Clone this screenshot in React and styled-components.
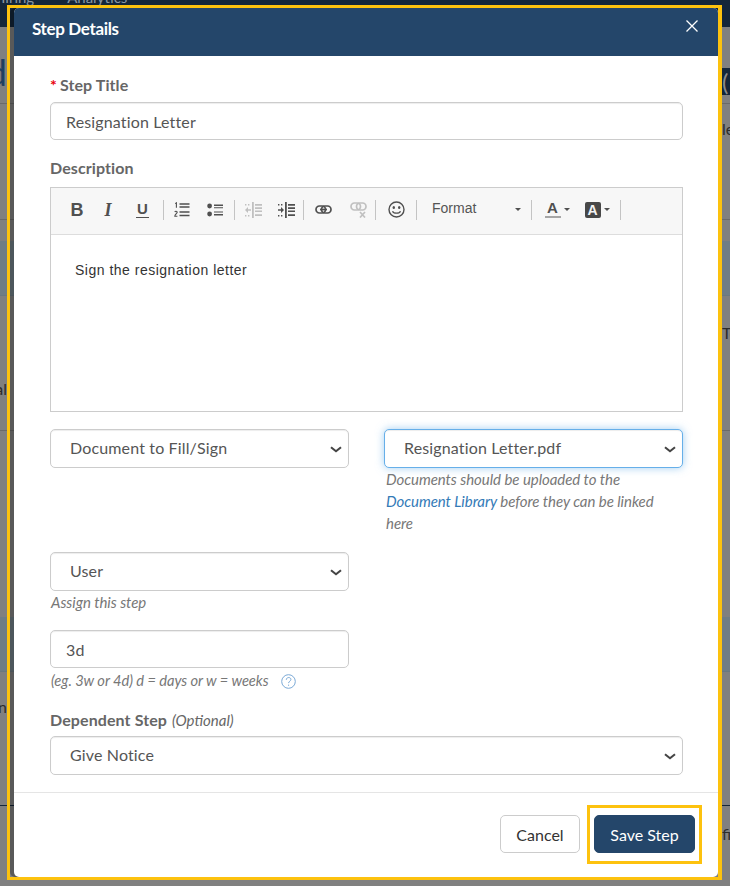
import React from "react";
import styled, { createGlobalStyle } from "styled-components";

const Global = createGlobalStyle`
  html, body { margin: 0; padding: 0; background: #808080; }
  * { box-sizing: border-box; }
`;

const Page = styled.div`
  position: relative;
  width: 730px;
  height: 886px;
  overflow: hidden;
  font-family: Lato, "Open Sans", sans-serif;
`;

/* dimmed application behind the dialog */
const Backdrop = styled.div`
  display: flex;
  flex-direction: column;
  height: 886px;
  background: #808080;
  color: #2c2c2c;
  font-size: 16px;
`;
const TopNav = styled.div`
  display: flex;
  gap: 33px;
  height: 27px;
  margin-left: -6px;
  background: #14263a;
  color: #8a96a3;
  font-size: 15px;
  line-height: 1;
  overflow: hidden;
  span { margin-top: -10px; }
`;
const BackRow = styled.div`
  display: flex;
  justify-content: space-between;
  align-items: flex-start;
  height: ${p => p.$h}px;
  background: ${p => p.$tint ? "#6f7d85" : "transparent"};
  border-bottom: ${p => p.$line ? `1px solid ${p.$line}` : "none"};
`;
const EdgeLeft = styled.span`
  width: 7px;
  display: flex;
  justify-content: flex-end;
  overflow: hidden;
  white-space: nowrap;
  margin-top: ${p => p.$t || 0}px;
  color: ${p => p.$c || "inherit"};
  font-size: ${p => p.$s || 16}px;
  line-height: 1.2;
`;
const EdgeRight = styled.span`
  width: 8px;
  overflow: hidden;
  white-space: nowrap;
  margin-top: ${p => p.$t || 0}px;
  font-size: ${p => p.$s || 16}px;
  line-height: 1.2;
  background: ${p => p.$bg || "transparent"};
  color: ${p => p.$c || "inherit"};
  height: ${p => p.$h ? p.$h + "px" : "auto"};
`;

const Modal = styled.div`
  position: absolute;
  left: 14px;
  top: 8px;
  width: 704px;
  height: 869px;
  display: flex;
  flex-direction: column;
  background: #fff;
  border-radius: 5px;
  box-shadow: -4px 0 0 rgba(0, 0, 0, 0.3);
`;
const Header = styled.header`
  flex: none;
  display: flex;
  justify-content: space-between;
  height: 48px;
  padding: 11px 19px 0 18px;
  background: #24466a;
  border-radius: 5px 5px 0 0;
  color: #fff;
`;
const Title = styled.h4`
  margin: 0;
  font-size: 17px;
  line-height: 20px;
  font-weight: 700;
  letter-spacing: -0.35px;
`;
const Close = styled.button`
  width: 14px;
  height: 14px;
  padding: 0;
  margin: 0;
  border: 0;
  background: none;
  color: #fff;
  display: flex;
`;
const Body = styled.div`
  flex: none;
  padding: 19px 35px 17px 36px;
  border-bottom: 1px solid #e5e5e5;
`;
const Label = styled.label`
  display: block;
  height: 20px;
  margin-bottom: ${p => p.$mb}px;
  color: #666;
  font-size: 16px;
  line-height: 20px;
  font-weight: 700;
  letter-spacing: 0.1px;
  em { font-weight: 400; font-size: 15px; letter-spacing: 0; margin-left: 1px; }
`;
const Req = styled.span`
  color: #e8000b;
  margin-right: 3px;
`;
const Input = styled.input`
  display: block;
  width: 100%;
  height: 38px;
  padding: 0 15px;
  margin-bottom: ${p => p.$mb || 0}px;
  border: 1px solid #ccc;
  border-radius: 5px;
  background: #fff;
  box-shadow: inset 0 1px 1px rgba(0, 0, 0, 0.075);
  color: #555;
  font: 400 16px Lato, sans-serif;
  letter-spacing: 0.15px;
  outline: none;
`;
const SelectBox = styled.div`
  position: relative;
  color: #444;
  svg { position: absolute; right: 7px; top: 17px; pointer-events: none; }
`;
const Select = styled.select`
  display: block;
  width: 100%;
  height: 39px;
  padding: 0 30px 2px 19px;
  appearance: none;
  border: 1px solid ${p => p.$focus ? "#66afe9" : "#ccc"};
  border-radius: 5px;
  background: #fff;
  box-shadow: ${p => p.$focus
    ? "inset 0 1px 1px rgba(0,0,0,.075), 0 0 8px rgba(102,175,233,.6)"
    : "inset 0 1px 1px rgba(0,0,0,.075)"};
  color: #555;
  font: 400 16px Lato, sans-serif;
  letter-spacing: 0.15px;
  outline: none;
`;
const Editor = styled.div`
  height: 225px;
  margin-bottom: 17px;
  border: 1px solid #ccc;
`;
const Toolbar = styled.div`
  display: flex;
  align-items: center;
  height: 47px;
  padding: 0 0 3px 9px;
  background: #f7f7f7;
  border-bottom: 1px solid #ddd;
  color: #505050;
`;
const Tool = styled.span`
  flex: none;
  display: flex;
  justify-content: center;
  align-items: center;
  width: ${p => p.$w}px;
  margin-right: ${p => p.$mr || 0}px;
  height: 22px;
  opacity: ${p => p.$off ? 0.32 : 1};
`;
const Sep = styled.span`
  flex: none;
  width: 1px;
  height: 20px;
  background: #c4c4c4;
`;
const BoldGlyph = styled.span`
  font: 700 18px/1 "Liberation Sans", sans-serif;
`;
const ItalicGlyph = styled.span`
  font: italic 700 18px/1 "Liberation Serif", serif;
`;
const UnderGlyph = styled.span`
  font: 700 15px/14px "Liberation Sans", sans-serif;
  border-bottom: 1px solid #505050;
  padding: 0 1px 1px;
`;
const FormatLabel = styled.span`
  flex: none;
  width: 114px;
  padding: 0 10px 0 15px;
  display: flex;
  justify-content: space-between;
  align-items: center;
  color: #555;
  font: 400 14px "Liberation Sans", sans-serif;
  span { margin-top: -3px; }
`;
const Caret = styled.i`
  display: inline-block;
  width: 0;
  height: 0;
  border-left: 3.5px solid transparent;
  border-right: 3.5px solid transparent;
  border-top: 3.5px solid #505050;
`;
const ColorGlyph = styled.span`
  width: 16px;
  height: 17px;
  text-align: center;
  font: 700 15px/14px "Liberation Sans", sans-serif;
  border-bottom: 2px solid #a6a6a6;
  margin-right: 3px;
`;
const BgGlyph = styled.span`
  width: 16px;
  height: 16px;
  border-radius: 2px;
  background: #484848;
  color: #f4f4f4;
  text-align: center;
  font: 700 14px/16px "Liberation Sans", sans-serif;
  margin-right: 3px;
`;
const EditArea = styled.div`
  padding: 27px 24px;
  color: #333;
  font: 400 14px/16px "Liberation Sans", sans-serif;
  letter-spacing: 0.5px;
`;
const Columns = styled.div`
  display: grid;
  grid-template-columns: 299px 299px;
  column-gap: 35px;
  height: 106px;
  margin-bottom: 17px;
`;
const HalfColumn = styled.div`
  width: 299px;
`;
const Help = styled.p`
  margin: ${p => p.$t || 0}px 0 ${p => p.$b || 0}px;
  padding-left: ${p => p.$pl || 0}px;
  color: #777;
  font-size: ${p => p.$s || 15}px;
  line-height: 22px;
  font-style: italic;
  letter-spacing: -0.05px;
  white-space: ${p => p.$nowrap ? "nowrap" : "normal"};
  a { color: #337ab7; text-decoration: none; }
`;
const HelpIcon = styled.span`
  display: inline-flex;
  vertical-align: -3px;
  margin-left: 12px;
  color: #7aa9d6;
`;
const Footer = styled.footer`
  flex: 1;
  display: flex;
  justify-content: flex-end;
  align-items: flex-start;
  gap: 14px;
  padding: 22px 23px 0 0;
`;
const Button = styled.button`
  position: relative;
  width: ${p => p.$w}px;
  height: 38px;
  padding: 0;
  border: 1px solid ${p => p.$primary ? "#24466a" : "#ccc"};
  border-radius: 5px;
  background: ${p => p.$primary ? "#24466a" : "#fff"};
  color: ${p => p.$primary ? "#fff" : "#333"};
  font: 400 16px Lato, sans-serif;
`;
const PageMark = styled.div`
  position: absolute;
  left: 7px;
  top: 5px;
  width: 715px;
  height: 875px;
  border: 3px solid #fdc20e;
  border-right-width: 4px;
  pointer-events: none;
`;
const ButtonMark = styled.span`
  position: absolute;
  left: -8px;
  right: -8px;
  top: -11px;
  bottom: -12px;
  border: 3px solid #fdc20e;
  pointer-events: none;
`;

const Chevron = () => (
  <svg width="12" height="7" viewBox="0 0 12 7" fill="none" stroke="currentColor" strokeWidth="2.1">
    <path d="M1 1.2l5 4 5-4" />
  </svg>
);
const IconOL = () => (
  <svg width="16" height="16" viewBox="0 0 16 16" fill="none" stroke="currentColor">
    <path d="M5.5 2h10M5.5 5h10M5.5 10h10M5.5 13.5h10" strokeWidth="1.5" />
    <path d="M1.2 1.6l1.2-.8v5" strokeWidth="1.1" />
    <path d="M.8 10c.4-1 2.4-1 2.4.2 0 1-2.4 2-2.4 4h2.6" strokeWidth="1.1" />
  </svg>
);
const IconUL = () => (
  <svg width="16" height="14" viewBox="0 0 16 14" fill="currentColor">
    <circle cx="2.6" cy="3" r="2.4" />
    <circle cx="2.6" cy="11" r="2.4" />
    <path d="M7 1.4h9v1.5H7zM7 4.2h9v1H7zM7 8.6h9v1H7zM7 11h9v1.6H7z" />
  </svg>
);
const IconIndent = ({ reverse }) => (
  <svg width="17" height="16" viewBox="0 0 17 16" fill="currentColor">
    <path d="M7 0h1.8v16H7zM10 2h7v1.7h-7zM10 5.2h7v1.7h-7zM10 8.4h7v1.7h-7zM10 12.2h7V14h-7z" />
    {reverse
      ? <path d="M0 7.2h3V5l3 3-3 3V8.8H0zM0 2h1.4v1.4H0zM3 2h1.4v1.4H3zM0 13h1.4v1.4H0zM3 13h1.4v1.4H3z" />
      : <path d="M6 7.2H3V5L0 8l3 3V8.8h3zM0 2h1.4v1.4H0zM3 2h1.4v1.4H3zM0 13h1.4v1.4H0zM3 13h1.4v1.4H3z" />}
  </svg>
);
const IconLink = () => (
  <svg width="17" height="9" viewBox="0 0 17 9" fill="none" stroke="currentColor" strokeWidth="1.7">
    <rect x="1" y="1" width="9.5" height="7" rx="3.4" />
    <rect x="6.5" y="1" width="9.5" height="7" rx="3.4" />
    <path d="M5 4.5h7" />
  </svg>
);
const IconUnlink = () => (
  <svg width="17" height="16" viewBox="0 0 17 16" fill="none" stroke="currentColor" strokeWidth="1.7">
    <rect x="1" y="1" width="9.5" height="7" rx="3.4" />
    <rect x="6.5" y="1" width="9.5" height="7" rx="3.4" />
    <path d="M10 10l5 5.5M15 10l-5 5.5" />
  </svg>
);
const IconSmile = () => (
  <svg width="17" height="17" viewBox="0 0 17 17" fill="none" stroke="currentColor">
    <circle cx="8.5" cy="8.5" r="7.5" strokeWidth="1.4" />
    <ellipse cx="5.8" cy="6.5" rx="1.2" ry="1.5" fill="currentColor" stroke="none" />
    <ellipse cx="11.2" cy="6.5" rx="1.2" ry="1.5" fill="currentColor" stroke="none" />
    <path d="M4.5 10.2c1 2.6 7 2.6 8 0" strokeWidth="1.3" />
  </svg>
);
const IconX = () => (
  <svg width="14" height="14" viewBox="0 0 14 14" stroke="currentColor" strokeWidth="1.3" fill="none">
    <path d="M1.5 1.5l11 11M12.5 1.5l-11 11" />
  </svg>
);
const IconHelp = () => (
  <svg width="15" height="15" viewBox="0 0 15 15" fill="none" stroke="currentColor">
    <circle cx="7.5" cy="7.5" r="6.8" />
    <path d="M5.3 5.8c0-3 4.6-3 4.6-.3 0 1.7-2.3 1.7-2.3 3.6" />
    <path d="M7.6 10.6v1.2" />
  </svg>
);

const Dropdown = ({ value, focus }) => (
  <SelectBox>
    <Select $focus={focus} defaultValue={value}><option>{value}</option></Select>
    <Chevron />
  </SelectBox>
);

export default function App() {
  return (
    <Page>
      <Global />
      <Backdrop>
        <TopNav><span>Hiring</span><span>Analytics</span></TopNav>
        <BackRow $h={77} $line="#6a6a6a">
          <EdgeLeft $t={24} $s={36} $c="#1f3f60">d</EdgeLeft>
          <EdgeRight $t={41} $h={27} $bg="#14263a" $c="#8a8a8a" $s={24}>(</EdgeRight>
        </BackRow>
        <BackRow $h={116} $line="#6a6a6a">
          <span />
          <EdgeRight $t={15}>le</EdgeRight>
        </BackRow>
        <BackRow $h={21} />
        <BackRow $h={55} $tint $line="#6a7880" />
        <BackRow $h={135} $line="#6a6a6a">
          <EdgeLeft $t={83}>al</EdgeLeft>
          <EdgeRight $t={27}>To</EdgeRight>
        </BackRow>
        <BackRow $h={186} />
        <BackRow $h={55} $tint $line="#6a7880" />
        <BackRow $h={134} $line="#14263a">
          <EdgeLeft $t={25}>n</EdgeLeft>
        </BackRow>
        <BackRow $h={60}>
          <span />
          <EdgeRight $t={18}>fi</EdgeRight>
        </BackRow>
      </Backdrop>

      <Modal>
        <Header>
          <Title>Step Details</Title>
          <Close aria-label="Close"><IconX /></Close>
        </Header>
        <Body>
          <Label $mb={7}><Req>*</Req>Step Title</Label>
          <Input $mb={18} defaultValue="Resignation Letter" readOnly />
          <Label $mb={9}>Description</Label>
          <Editor>
            <Toolbar>
              <Tool $w={34}><BoldGlyph>B</BoldGlyph></Tool>
              <Tool $w={28}><ItalicGlyph>I</ItalicGlyph></Tool>
              <Tool $w={41}><UnderGlyph>U</UnderGlyph></Tool>
              <Sep />
              <Tool $w={36}><IconOL /></Tool>
              <Tool $w={30} $mr={4}><IconUL /></Tool>
              <Sep />
              <Tool $w={36} $off><IconIndent /></Tool>
              <Tool $w={30} $mr={2}><IconIndent reverse /></Tool>
              <Sep />
              <Tool $w={38}><IconLink /></Tool>
              <Tool $w={32} $mr={1} $off><IconUnlink /></Tool>
              <Sep />
              <Tool $w={40}><IconSmile /></Tool>
              <Sep />
              <FormatLabel><span>Format</span><Caret /></FormatLabel>
              <Sep />
              <Tool $w={50}><ColorGlyph>A</ColorGlyph><Caret /></Tool>
              <Tool $w={30} $mr={8}><BgGlyph>A</BgGlyph><Caret /></Tool>
              <Sep />
            </Toolbar>
            <EditArea>Sign the resignation letter</EditArea>
          </Editor>
          <Columns>
            <div><Dropdown value="Document to Fill/Sign" /></div>
            <div>
              <Dropdown value="Resignation Letter.pdf" focus />
              <Help $pl={2}>
                Documents should be uploaded to the <a href="#library">Document Library</a> before they can be linked here
              </Help>
            </div>
          </Columns>
          <HalfColumn>
            <Dropdown value="User" />
            <Help $b={17} $pl={1}>Assign this step</Help>
            <Input defaultValue="3d" readOnly />
            <Help $t={1} $b={19} $pl={1} $s={14.7} $nowrap>
              (eg. 3w or 4d) d = days or w = weeks
              <HelpIcon><IconHelp /></HelpIcon>
            </Help>
          </HalfColumn>
          <Label $mb={6}>Dependent Step <em>(Optional)</em></Label>
          <Dropdown value="Give Notice" />
        </Body>
        <Footer>
          <Button $w={80}>Cancel</Button>
          <Button $w={101} $primary>Save Step<ButtonMark /></Button>
        </Footer>
      </Modal>
      <PageMark />
    </Page>
  );
}
